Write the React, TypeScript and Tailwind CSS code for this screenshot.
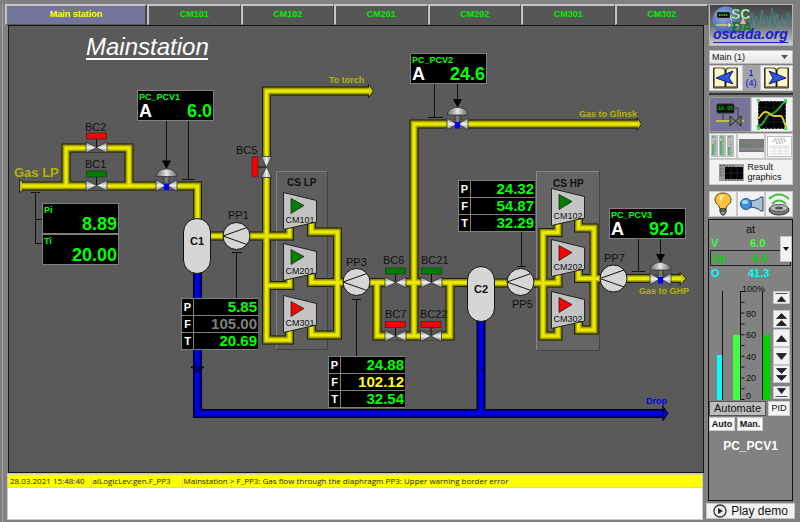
import React from "react";

const YELLOW_PIPES = [
  "M22 186H197.500V222",
  "M66 186V148H129V186",
  "M208 236H289.500V224",
  "M369 91H266.500V340H289.500V326",
  "M266.500 285.500H289.500V274",
  "M311.500 218V232H337.500V335H311.500V320",
  "M311.500 270V282.500H470",
  "M638 124H414V336",
  "M377 282.500V336H450V282.500",
  "M492 283H558V272",
  "M558 220V232.500H543V336H558V322",
  "M578.500 215V228H594V330H578.500V316",
  "M578.500 266V278.500H681",
].join("");

const BLUE_PIPES = "M197.500 270V413.500H663M481 318V413.500";

function Pipes({ d, layers }: { d: string; layers: [string, number][] }) {
  return (
    <g fill="none" strokeLinejoin="miter">
      {layers.map(([color, width]) => (
        <path key={width} d={d} stroke={color} strokeWidth={width} />
      ))}
    </g>
  );
}

function BlockValve({ x, y, open, vertical }: { x: number; y: number; open?: boolean; vertical?: boolean }) {
  return (
    <g transform={`translate(${x} ${y})${vertical ? " rotate(-90)" : ""}`}>
      <rect x="-10.500" y="-4.500" width="21" height="9" fill="#5a5a5a" />
      <path d="M0 0V-9" stroke="#111" strokeWidth="1" />
      <path d="M-10.500 -5.500L0 0L-10.500 5.500ZM10.500 -5.500L0 0L10.500 5.500Z" fill="url(#metal)" stroke="#333" strokeWidth="0.8" />
      <rect x="-10" y="-14.500" width="20" height="6" fill={open ? "#008000" : "#ff0000"} stroke="#222" strokeWidth="0.6" />
    </g>
  );
}

function ControlValve({ x, y }: { x: number; y: number }) {
  return (
    <g transform={`translate(${x} ${y})`}>
      <rect x="-10.500" y="-4.800" width="21" height="9.600" fill="#5a5a5a" />
      <path d="M-10.500 -6L-1 0L-10.500 6ZM10.500 -6L1 0L10.500 6Z" fill="url(#metal)" stroke="#333" strokeWidth="0.8" />
      <rect x="-2.500" y="-9" width="5" height="8" fill="#777" stroke="#222" strokeWidth="0.7" />
      <rect x="-2.500" y="-2" width="5" height="6.500" fill="#0000ff" />
      <path d="M-10.500 -9C-10.500 -14 -5 -16.500 0 -16.500S10.500 -14 10.500 -9Z" fill="url(#dome)" stroke="#333" strokeWidth="0.8" />
      <path d="M-4.500 -25H4.500L0 -16.500Z" fill="#000" />
    </g>
  );
}

function Pump({ x, y }: { x: number; y: number }) {
  return (
    <g transform={`translate(${x} ${y})`} stroke="#111" strokeWidth="1">
      <circle r="13.500" fill="#d6d6d6" />
      <path d="M10.500 -8.500L-13.500 0L10.500 8.500" fill="none" />
    </g>
  );
}

function Compressor({ x, y, name, running }: { x: number; y: number; name: string; running?: boolean }) {
  return (
    <g transform={`translate(${x} ${y})`}>
      <path d="M0.500 0.500L33.500 8.500V30L0.500 37.500Z" fill="#c3c3c3" stroke="#222" strokeWidth="1" />
      <path d="M8 6.500L21 13.500L8 21.500Z" fill={running ? "#008000" : "#ff0000"} stroke="#222" strokeWidth="0.8" />
      <text x="17" y="31" fontSize="9" textAnchor="middle" fill="#111">{name}</text>
    </g>
  );
}

function Vessel({ x, y, name }: { x: number; y: number; name: string }) {
  return (
    <g transform={`translate(${x} ${y})`}>
      <rect x="0.500" y="0.500" width="27" height="55" rx="13.500" fill="#d6d6d6" stroke="#111" />
      <text x="14" y="27" fontSize="11" fontWeight="bold" textAnchor="middle" fill="#111">{name}</text>
    </g>
  );
}

const TAGS: [string, number, number][] = [
  ["BC2", 85, 131], ["BC1", 85, 168], ["BC5", 236, 154], ["PP1", 228, 219],
  ["PP3", 346, 266], ["BC6", 383, 264], ["BC21", 421, 264], ["BC7", 385, 318],
  ["BC22", 420, 318], ["PP5", 512, 308], ["PP7", 604, 262],
];

function Mimic() {
  return (
    <svg className="block" width="694" height="446" viewBox="9 26 694 446" fontFamily="Liberation Sans, Arial, sans-serif" role="img" aria-label="Gas station flow diagram">
      <defs>
        <linearGradient id="metal" x1="0" x2="0" y1="0" y2="1">
          <stop offset="0" stopColor="#777" />
          <stop offset="0.5" stopColor="#f0f0f0" />
          <stop offset="1" stopColor="#777" />
        </linearGradient>
        <linearGradient id="dome" x1="0" x2="1" y1="0" y2="0">
          <stop offset="0" stopColor="#666" />
          <stop offset="0.5" stopColor="#e4e4e4" />
          <stop offset="1" stopColor="#666" />
        </linearGradient>
      </defs>

      <text x="86" y="55" fontSize="24" fontStyle="italic" fill="#fff">Mainstation</text>
      <rect x="86" y="58" width="122" height="2" fill="#fff" />

      <rect x="276.500" y="171.500" width="51" height="178" fill="#5e5e5e" stroke="#444" />
      <path d="M276.500 349V171.500H327" fill="none" stroke="#808080" />
      <rect x="536.500" y="171.500" width="63" height="179" fill="#646464" stroke="#444" />
      <path d="M536.500 350V171.500H599" fill="none" stroke="#858585" />

      <Pipes d={BLUE_PIPES} layers={[["#000018", 9], ["#00008c", 7], ["#0000c0", 5], ["#0000e8", 3]]} />
      <path d="M663 406.500L668 413.500L663 420.500Z" fill="#0000dd" stroke="#000" strokeWidth="1" />
      <path d="M191 367H204L197.500 372Z" fill="#00008c" stroke="#000" strokeWidth="1" />
      <path d="M477 372L481 369L485 372" fill="none" stroke="#000060" strokeWidth="1" />

      <path d="M19.500 179.500L25 183V189L19.500 192.500Z" fill="#c4c400" stroke="#222" strokeWidth="1" />
      <path d="M368.500 84.500L373.500 91L368.500 97.500ZM637 117.500L641.500 124L637 130.500ZM680 272L686 278.500L680 285Z" fill="#d0d000" stroke="#222" strokeWidth="1" />
      <Pipes d={YELLOW_PIPES} layers={[["#1c1c00", 9], ["#8c8c00", 7], ["#b8b800", 5], ["#eaea00", 3]]} />

      <g fill="none" stroke="#111" strokeWidth="1">
        <path d="M31 192.500H40M35.500 192V243.500H43M35.500 219.500H43" />
        <path d="M166.500 120V162M188.500 120V179.500M182 179.500H195" />
        <path d="M457.500 83V102M434.500 83V117.500M428 117.500H443" />
        <path d="M660.500 238V256M638.500 238V271.500M632 271.500H645" />
        <path d="M232 252.500H242M236.500 252V299M352 299.500H361M356.500 299V356M521.500 231V266.500M517 266.500H526" />
      </g>

      <BlockValve x={96.500} y={147.500} />
      <BlockValve x={96.500} y={185.500} open />
      <BlockValve x={266.500} y={167} vertical />
      <BlockValve x={395.500} y={282.500} open />
      <BlockValve x={431.500} y={282.500} open />
      <BlockValve x={395.500} y={336} />
      <BlockValve x={431} y={336} />
      <ControlValve x={166.500} y={185.500} />
      <ControlValve x={457.500} y={124} />
      <ControlValve x={660.500} y={279} />
      <Pump x={236.500} y={236} />
      <Pump x={356.500} y={282} />
      <Pump x={520.500} y={282} />
      <Pump x={613.500} y={278.500} />
      <Vessel x={183} y={218} name="C1" />
      <Vessel x={467} y={266} name="C2" />
      <Compressor x={283} y={192} name="CM101" running />
      <Compressor x={283} y={243} name="CM201" running />
      <Compressor x={283} y={295} name="CM301" />
      <Compressor x={551} y={188} name="CM102" running />
      <Compressor x={551} y={239} name="CM202" />
      <Compressor x={551} y={291} name="CM302" />

      <g fontSize="11" fill="#111">
        {TAGS.map(([name, x, y]) => (
          <text key={name} x={x} y={y}>{name}</text>
        ))}
      </g>
      <g fontSize="10" fontWeight="bold" fill="#111">
        <text x="287" y="186">CS LP</text>
        <text x="553" y="187">CS HP</text>
      </g>
      <g fontSize="9" fontWeight="bold" fill="#b4b400">
        <text x="14" y="177" fontSize="13">Gas LP</text>
        <text x="329" y="83">To torch</text>
        <text x="579" y="117">Gas to Glinsk</text>
        <text x="639" y="294">Gas to GHP</text>
        <text x="646" y="404" fill="#0000ee">Drop</text>
      </g>
    </svg>
  );
}

function Regulator({ name, value, place }: { name: string; value: string; place: string }) {
  return (
    <section className={`absolute w-[77px] h-[31px] border border-[#808080] bg-black px-px font-bold text-[#00ff00] ${place}`}>
      <h3 className="text-[9px] leading-[12px]">{name}</h3>
      <p className="flex justify-between text-[18px] leading-[16px]">
        <span className="text-white">A</span>
        <span>{value}</span>
      </p>
    </section>
  );
}

function Readout({ name, value }: { name: string; value: string }) {
  return (
    <div className="h-[31px] border border-[#808080] bg-black px-px font-bold text-[#00ff00]">
      <h3 className="text-[9px] leading-[12px]">{name}</h3>
      <p className="text-right text-[18px] leading-[16px]">{value}</p>
    </div>
  );
}

type Row = [string, string, string];

function Triple({ rows, place }: { rows: Row[]; place: string }) {
  return (
    <dl className={`absolute w-[77px] border-t border-l border-[#808080] bg-black font-bold ${place}`}>
      {rows.map(([k, v, tone]) => (
        <div key={k} className="flex h-[17px] border-b border-[#808080]">
          <dt className="w-[12px] border-r border-[#808080] text-center text-[11px] leading-[16px] text-white">{k}</dt>
          <dd className={`flex-1 pr-px text-right text-[15px] leading-[16px] ${tone}`}>{v}</dd>
        </div>
      ))}
    </dl>
  );
}

const GREEN = "text-[#00ff00]";
const TABS = ["CM101", "CM102", "CM201", "CM202", "CM301", "CM302"];
const BTN = "flex items-center justify-center border border-[#c8c8c8] bg-[#f2f2f2]";

function Book({ flip }: { flip?: boolean }) {
  return (
    <svg width="25" height="24" viewBox="0 0 25 24" className={flip ? "-scale-x-100" : ""} aria-hidden="true">
      <path d="M0.500 2H10Q12 2 12.500 4Q13 2 15 2H24.500V22H0.500Z" fill="#8a8454" stroke="#3c3820" />
      <path d="M2 2.500H9Q11.500 3 11.500 5V20H2ZM23 2.500H16Q13.500 3 13.500 5V20H23Z" fill="#fbf6cc" />
      <path d="M12.500 4V21" stroke="#111" strokeWidth="1.500" />
      <path d="M3 12L20 5L16 12L20 18Z" fill="#2c53ee" stroke="#11205e" strokeWidth="1" />
    </svg>
  );
}

function Logo() {
  return (
    <svg className="block h-[42px] w-full" viewBox="0 0 84 42" preserveAspectRatio="none" fontFamily="Liberation Sans, Arial, sans-serif" fontWeight="bold" role="img" aria-label="OpenSCADA">
      <defs>
        <linearGradient id="logoBg" x1="0" x2="0" y1="0" y2="1">
          <stop offset="0" stopColor="#3c4040" />
          <stop offset="0.500" stopColor="#687070" />
          <stop offset="1" stopColor="#d0d0d0" />
        </linearGradient>
        <radialGradient id="globe" cx="0.4" cy="0.35" r="0.65">
          <stop offset="0" stopColor="#93aee8" />
          <stop offset="1" stopColor="#4262a8" />
        </radialGradient>
      </defs>
      <rect x="0.500" y="0.500" width="83" height="41" fill="url(#logoBg)" stroke="#b8b8b8" />
      <path d="M40 18L43 9L45 22L47 12L50 24L53 6L55 20L58 12L60 23L63 4L65 19L68 10L70 25L73 13L76 20L79 8L83 18M44 22V14M52 20V10M61 24V14M66 22V8M75 26V16M80 20V10" fill="none" stroke="#3e9898" strokeWidth="0.6" />
      <circle cx="17" cy="16" r="13.500" fill="url(#globe)" />
      <rect x="8" y="8" width="13" height="6" rx="1" fill="#080808" stroke="#888" strokeWidth="0.5" />
      <path d="M10 11H19" stroke="#00d800" strokeWidth="2" strokeDasharray="1.500 0.800" />
      <path d="M7 21H30" stroke="#ddd26a" strokeWidth="1.500" />
      <path d="M19 18L26 24V18L19 24ZM23 21V11H21" fill="#eee" stroke="#555" strokeWidth="0.6" />
      <text x="22" y="15" fontSize="14" fill="#fff" stroke="#189030" strokeWidth="0.6">SC</text>
      <text x="23" y="28" fontSize="14" fill="#107828">DA</text>
      <path d="M31 20L34 13L37 20Z" fill="#e8b0a0" />
      <text x="4" y="35" fontSize="14" fontStyle="italic" fill="#2020c8">oscada.org</text>
      <path d="M4 38.500H79" stroke="#2020c8" />
    </svg>
  );
}

function Trends() {
  const scale = [100, 80, 60, 40, 20, 0];
  return (
    <svg className="block" width="62" height="118" viewBox="710 283 62 118" fontFamily="Liberation Sans, Arial, sans-serif" role="img" aria-label="Regulator values in percent">
      <rect x="717" y="355" width="5" height="45" fill="#00ffff" />
      <rect x="733" y="335" width="7" height="65" fill="#40ff40" />
      <rect x="763" y="335" width="7" height="65" fill="#00d000" />
      <path d="M722.500 291V400M740.500 291V400M762.500 291V400" stroke="#111" />
      {Array.from({ length: 11 }, (_, i) => (
        <path key={i} d={`M740.500 ${291.5 + i * 10.8}h4`} stroke="#111" />
      ))}
      <g fontSize="9" fill="#111">
        {scale.map((n, i) => (
          <text key={n} x={n === 100 ? 742 : 746} y={n === 100 ? 292 : n === 0 ? 399 : 295 + i * 21.6}>{n === 100 ? "100%" : n}</text>
        ))}
      </g>
    </svg>
  );
}

const STEPS: [string, string, string][] = [
  ["Maximum", "h-[13px]", "M-6 -4H6M-4 4H4L0 -1Z"],
  ["Fast up", "mt-[6px] h-[18px]", "M-5 -1H5L0 -6ZM-5 6H5L0 1Z"],
  ["Up", "mt-px h-[18px]", "M-5 3H5L0 -3Z"],
  ["Down", "h-[18px]", "M-5 -3H5L0 3Z"],
  ["Fast down", "h-[18px]", "M-5 -6H5L0 -1ZM-5 1H5L0 6Z"],
  ["Minimum", "mt-[3px] h-[13px]", "M-6 4H6M-4 -4H4L0 1Z"],
];

function Sidebar() {
  return (
    <aside className="flex w-[94px] shrink-0 flex-col pr-[7px] pb-[3px]">
      <div className="ml-[3px]">
        <Logo />
        <div className="relative mt-[4px]">
          <select aria-label="Screen" className="block h-[14px] w-full appearance-none border border-[#bbb] bg-[linear-gradient(#f8f8f8,#e4e4e4)] px-[2px] text-[9px] leading-[12px] text-[#111]">
            <option>Main (1)</option>
          </select>
          <svg className="pointer-events-none absolute top-[5px] right-[5px]" width="7" height="4" aria-hidden="true"><path d="M0 0H7L3.500 4Z" fill="#555" /></svg>
        </div>
        <div className="mt-px flex h-[26px]">
          <button aria-label="Previous page" className={`${BTN} flex-1`}><Book /></button>
          <span className="w-[17px] bg-[#a4a4a4] pt-[3px] text-center text-[9px] leading-[10px] text-[#0000ee]">1<br />(4)</span>
          <button aria-label="Next page" className={`${BTN} flex-1`}><Book flip /></button>
        </div>
        <hr className="mt-[2px] h-[2px] border-0 bg-[#333]" />
        <div className="mt-[2px] flex h-[35px]">
          <button aria-label="Mimics" aria-pressed="true" className="flex flex-1 items-center justify-center border border-[#999] bg-[#75759b]">
            <svg width="30" height="26" viewBox="0 0 30 26" aria-hidden="true">
              <rect x="2" y="2" width="17" height="9" rx="1" fill="#0c0c0c" stroke="#333" />
              <text x="3" y="8" fontSize="5" fontFamily="Liberation Mono, monospace" fill="#00e000">10.95</text>
              <path d="M8 12V18M20 6H23V16" stroke="#333" fill="none" />
              <path d="M1 19H29" stroke="#c4bc40" strokeWidth="2" />
              <path d="M15 14L26 24V14L15 24Z" fill="#777" stroke="#222" />
            </svg>
          </button>
          <button aria-label="Graphics" className={`${BTN} flex-1`}>
            <svg width="32" height="31" viewBox="0 0 32 31" aria-hidden="true">
              <rect x="2" y="2" width="28" height="28" fill="#000" stroke="#eee" strokeDasharray="2 1.500" />
              <path d="M10 2V30M18 2V30M25 2V30M2 9H30M2 16H30M2 23H30" stroke="#343434" strokeDasharray="1 1" />
              <path d="M1 27C8 28 9 17 13 16S21 12 24 8S28 3 31 3" fill="none" stroke="#23a83c" strokeWidth="2" />
              <path d="M1 20C4 20 5 14 9 13S14 17 18 17H25C28 19 28 26 31 29" fill="none" stroke="#dec82c" strokeWidth="2" />
              <path d="M1 0H4V3H1ZM28 0H31V3H28ZM1 28H4V31H1ZM28 28H31V31H28Z" fill="#40e050" />
            </svg>
          </button>
        </div>
        <div className="mt-px flex h-[26px]">
          <button aria-label="Contours" className={`${BTN} flex-1`}>
            <svg width="24" height="22" viewBox="0 0 24 22" aria-hidden="true">
              <path d="M0 0H7V22H0ZM8 0H15V22H8ZM16 0H23V22H16Z" fill="#b8bcb8" />
              <path d="M2 9V20M10 6V20M18 12V20" stroke="#30b060" strokeWidth="1.500" />
              <path d="M4 6V20M12 3V20M20 7V20" stroke="#777" strokeDasharray="1 1" />
              <path d="M1 2H4M9 2H12M17 2H20" stroke="#28a848" />
            </svg>
          </button>
          <button aria-label="Overview" className={`${BTN} flex-1`}>
            <svg width="25" height="14" viewBox="0 0 25 14" aria-hidden="true">
              <rect width="25" height="13" fill="#7c7c7c" />
              <path d="M1 6H12" stroke="#409050" strokeDasharray="2 1" />
              <path d="M0 10H25" stroke="#999" />
            </svg>
          </button>
          <button aria-label="Documents" className={`${BTN} flex-1`}>
            <svg width="25" height="21" viewBox="0 0 25 21" aria-hidden="true">
              <rect x="0.500" y="0.500" width="24" height="20" fill="#fff" stroke="#bbb" />
              <path d="M7 3H18M5 5H20M9 7H16" stroke="#999" strokeDasharray="2 1" />
              <path d="M2 10H23M2 12H23M2 15H23M2 18H23M7 10V18M13 10V18M19 10V18" stroke="#ccc" strokeWidth="0.7" />
            </svg>
          </button>
        </div>
        <button className={`${BTN} h-[26px] w-full gap-[4px] pl-[6px] text-left text-[9px] leading-[10px] text-[#111]`}>
          <svg width="25" height="17" viewBox="0 0 25 17" aria-hidden="true">
            <rect width="25" height="17" fill="#999" />
            <rect x="6" y="3" width="18" height="12" fill="#020202" />
            <path d="M1 2H16M1 5H5M1 8H5M1 11H5M6 16H24" stroke="#555" strokeDasharray="2 1" />
            <path d="M6 9H24M12 3V15M18 3V15" stroke="#1c1c2c" />
          </svg>
          <span className="w-[42px]">Result graphics</span>
        </button>
        <div className="mt-[6px] flex h-[26px]">
          <button aria-label="Light" className={`${BTN} flex-1`}>
            <svg width="20" height="24" viewBox="0 0 20 24" aria-hidden="true">
              <path d="M10 1C5 1 2 4 2 8S7 13 7 17H13C13 13 18 12 18 8S15 1 10 1Z" fill="#ffc238" stroke="#5c4310" />
              <path d="M6 6Q8 2 12 4Q8 5 8 10Z" fill="#fff2a8" />
              <path d="M7 17H13V20L11 23H9L7 20ZM7 19H13" fill="#999" stroke="#222" />
            </svg>
          </button>
          <button aria-label="Horn" className={`${BTN} flex-1`}>
            <svg width="25" height="20" viewBox="0 0 25 20" aria-hidden="true">
              <path d="M9 7Q18 7 22 3H24V17H22Q18 13 9 13Z" fill="#a4c4d6" stroke="#34424a" />
              <circle cx="7" cy="10" r="5.500" fill="#3c93dd" stroke="#16508c" />
              <ellipse cx="6" cy="8" rx="3" ry="2" fill="#add8ff" />
            </svg>
          </button>
          <button aria-label="Buzzer" className={`${BTN} flex-1`}>
            <svg width="24" height="24" viewBox="0 0 24 24" aria-hidden="true">
              <path d="M2 7Q12 -2 22 7M5 12Q12 5 19 12" fill="none" stroke="#3ec03e" strokeWidth="2" />
              <ellipse cx="12" cy="18" rx="10" ry="5" fill="#777" stroke="#333" />
              <ellipse cx="12" cy="16" rx="9" ry="3.500" fill="#bbb" stroke="#555" />
              <ellipse cx="12" cy="16" rx="4" ry="1.500" fill="#555" />
            </svg>
          </button>
        </div>
      </div>

      <section className="mt-[2px] ml-[2px] flex-1 border border-[#111] bg-[#828282]">
        <h2 className="mt-[3px] text-center text-[11px] leading-[13px] text-[#111]">at</h2>
        <div className="relative text-[11px] font-bold leading-[14px]">
          <p className="flex pl-[2px] text-[#40ff40]"><span className="w-[39px]">V</span>6.0</p>
          <p className="mx-px flex border border-[#222] pl-px text-[#00d000]"><span className="w-[40px]">Sp</span>6.0</p>
          <p className="flex pl-[2px] text-[#00ffff]"><span className="w-[37px]">O</span>41.3</p>
          <button aria-label="Set points" className={`${BTN} absolute top-0 right-0 h-[26px] w-[12px]`}>
            <svg width="6" height="4" aria-hidden="true"><path d="M0 0H6L3 4Z" fill="#111" /></svg>
          </button>
        </div>
        <div className="mt-[3px] flex justify-between pr-[2px]">
          <div className="pl-px"><Trends /></div>
          <div className="flex w-[17px] flex-col pt-[8px]">
            {STEPS.map(([label, size, d]) => (
              <button key={label} aria-label={label} className={`${BTN} w-full ${size}`}>
                <svg width="13" height="13" viewBox="-6.5 -6.5 13 13" className="shrink-0" aria-hidden="true"><path d={d} fill="#222" stroke="#222" strokeWidth="0.8" /></svg>
              </button>
            ))}
          </div>
        </div>
        <div className="flex justify-between pr-[2px] text-[#111]">
          <button className="h-[15px] w-[57px] border border-[#555] bg-[#bdbdbd] text-[11px] leading-[13px]">Automate</button>
          <button className="h-[15px] w-[22px] border border-[#ccc] bg-[#f4f4f4] text-[9px] leading-[13px]">PID</button>
        </div>
        <div className="mt-px flex gap-[2px] text-[9px] font-bold leading-[12px] text-[#111]">
          <button className="h-[14px] w-[26px] border border-[#ccc] bg-[#f8f8f8]">Auto</button>
          <button className="h-[14px] w-[26px] border border-[#ccc] bg-[#f8f8f8]">Man.</button>
        </div>
        <h2 className="mt-[8px] text-center text-[12px] font-bold leading-[14px] text-white">PC_PCV1</h2>
      </section>
      <button className={`${BTN} -mr-[2px] mt-[2px] h-[16px] gap-[4px] text-[12px] leading-[14px] text-[#111]`}>
        <svg width="14" height="14" viewBox="0 0 14 14" aria-hidden="true">
          <circle cx="7" cy="7" r="6" fill="none" stroke="#333" strokeWidth="1.300" />
          <path d="M5 4L10 7L5 10Z" fill="#222" />
        </svg>
        Play demo
      </button>
    </aside>
  );
}

export default function App() {
  return (
    <div className="flex min-h-screen bg-[#808080] pt-[4px] font-['Liberation_Sans',Arial,sans-serif]">
      <div className="ml-[2px] flex min-w-0 flex-1 flex-col border-l border-[#a4a4a4] pb-[2px] pl-[2px]">
        <nav role="tablist" aria-label="Stations" className="-mr-[2px] flex h-[21px] text-[9px] font-bold">
          <button role="tab" aria-selected="true" className="w-[142px] border-2 border-b border-t-[#c4c4c4] border-l-[#c4c4c4] border-r-[#444] border-b-[#555] bg-[#75759b] text-[#ffff00]">Main station</button>
          {TABS.map((t) => (
            <button key={t} role="tab" aria-selected="false" className="flex-1 border-2 border-r border-b border-t-[#c4c4c4] border-l-[#c4c4c4] border-r-[#444] border-b-[#555] bg-[#565656] text-[#00ee00]">{t}</button>
          ))}
        </nav>
        <main className="relative ml-[3px] mr-[2px] flex-1 overflow-hidden border border-[#161616] bg-[#5a5a5a]">
          <Mimic />
          <Regulator name="PC_PCV1" value="6.0" place="left-[128px] top-[64px]" />
          <Regulator name="PC_PCV2" value="24.6" place="left-[401px] top-[27px]" />
          <Regulator name="PC_PCV3" value="92.0" place="left-[600px] top-[182px]" />
          <section className="absolute left-[33px] top-[177px] w-[77px]">
            <Readout name="Pi" value="8.89" />
            <Readout name="Ti" value="20.00" />
          </section>
          <Triple place="left-[172px] top-[272px]" rows={[["P", "5.85", GREEN], ["F", "105.00", "text-[#808080]"], ["T", "20.69", GREEN]]} />
          <Triple place="left-[319px] top-[330px]" rows={[["P", "24.88", GREEN], ["F", "102.12", "text-[#ffff00]"], ["T", "32.54", GREEN]]} />
          <Triple place="left-[449px] top-[154px]" rows={[["P", "24.32", GREEN], ["F", "54.87", GREEN], ["T", "32.29", GREEN]]} />
        </main>
        <div className="ml-[2px] mr-[3px] h-[47px] border border-[#c8c8c8] bg-white">
          <table className="w-full table-fixed border-collapse font-['Open_Sans','Liberation_Sans',sans-serif] text-[8px] leading-[12px] text-[#222]" aria-label="Alarms">
            <tbody>
              <tr className="border-y border-[#d8d8a0] bg-[#ffff00]">
                <td className="w-[83px] whitespace-nowrap border-r border-[#dcdc60] pl-[2px]">28.03.2021 15:48:40</td>
                <td className="w-[91px] whitespace-nowrap border-r border-[#dcdc60] pl-px">alLogicLev:gen.F_PP3</td>
                <td className="whitespace-nowrap pl-px">Mainstation &gt; F_PP3: Gas flow through the diaphragm PP3: Upper warning border error</td>
              </tr>
            </tbody>
          </table>
        </div>
      </div>
      <Sidebar />
    </div>
  );
}
